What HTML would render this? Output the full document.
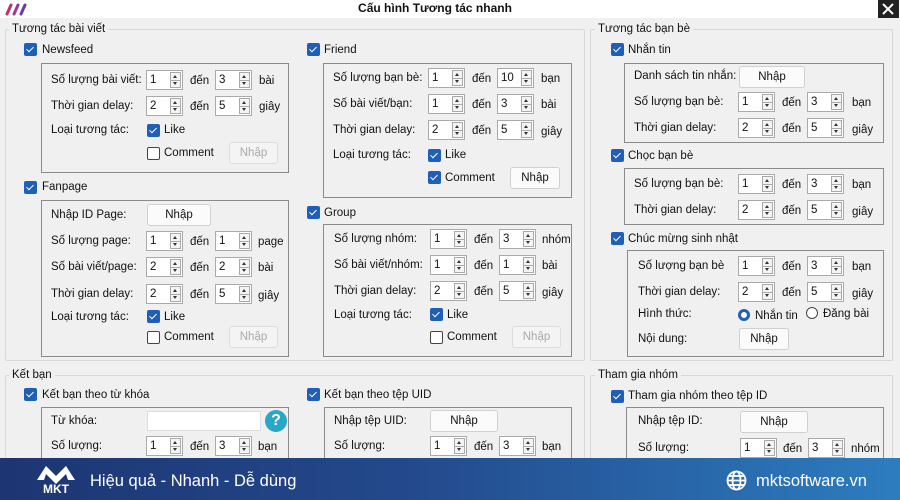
<!DOCTYPE html>
<html><head><meta charset="utf-8">
<style>
*{box-sizing:border-box;margin:0;padding:0}
body{width:900px;height:500px;overflow:hidden;background:#f0f0f0;font-family:"Liberation Sans",sans-serif;font-size:11.5px;color:#111;position:relative}
.a{position:absolute}
.t{position:absolute;white-space:nowrap;line-height:14px;transform:translateY(-7px)}
.g{position:absolute;border:1px solid #d8d8d8;border-radius:2px}
.ib{position:absolute;border:1px solid #8a8a8a}
.lg{position:absolute;background:#f0f0f0;padding:0 3px;line-height:14px}
.cb{position:absolute;width:13px;height:13px;border-radius:2px;background:#1f5fb8}
.cb:after{content:"";position:absolute;left:4px;top:1.5px;width:3px;height:6px;border:solid #fff;border-width:0 1.6px 1.6px 0;transform:rotate(45deg)}
.cu{position:absolute;width:13px;height:13px;border-radius:2px;border:1px solid #444;background:#fff}
.sp{position:absolute;width:37px;height:20px;background:#fff;border:1px solid #aaa;padding:1px 3px;line-height:16px}
.sp i{position:absolute;right:1px;top:1px;width:11px;height:16px;border:1px solid #aaa;background:#f4f4f4}
.sp i:before{content:"";position:absolute;left:2px;top:2px;border:2.5px solid transparent;border-bottom:3px solid #333;border-top:0}
.sp i:after{content:"";position:absolute;left:2px;bottom:2px;border:2.5px solid transparent;border-top:3px solid #333;border-bottom:0}
.sp i b{position:absolute;left:0;right:0;top:7px;border-top:1px solid #aaa}
.bt{position:absolute;height:22px;background:#fbfbfb;border:1px solid #d0d0d0;border-radius:3px;text-align:center;line-height:20px}
.bd{color:#aaa;background:#f4f4f4;border-color:#ddd}
</style></head><body>
<div class="a" style="left:0;top:0;width:900px;height:18px;background:#fff"></div>
<svg class="a" style="left:4px;top:2px" width="26" height="14"><g stroke-width="3" stroke-linecap="round"><line x1="3" y1="12" x2="7" y2="3" stroke="#c0306a"/><line x1="10" y1="12" x2="14" y2="3" stroke="#9b3a8c"/><line x1="17" y1="12" x2="21" y2="3" stroke="#6b3aa0"/></g></svg>
<div class="a" style="left:0;width:900px;top:1px;text-align:center;font-weight:bold;font-size:12px"><span style="position:relative;left:-15px">Cấu hình Tương tác nhanh</span></div>
<div class="a" style="left:878px;top:0;width:21px;height:18px;background:#222"></div>
<svg class="a" style="left:882px;top:3px" width="12" height="12"><path d="M1 1L11 11M11 1L1 11" stroke="#fff" stroke-width="2"/></svg>

<div class="g" style="left:5px;top:29px;width:580px;height:332px"></div><div class="lg" style="left:9px;top:22px">Tương tác bài viết</div>
<div class="g" style="left:590px;top:29px;width:303px;height:332px"></div><div class="lg" style="left:595px;top:22px">Tương tác bạn bè</div>
<div class="g" style="left:5px;top:375px;width:580px;height:100px"></div><div class="lg" style="left:9px;top:368px">Kết bạn</div>
<div class="g" style="left:590px;top:375px;width:303px;height:100px"></div><div class="lg" style="left:595px;top:368px">Tham gia nhóm</div>

<div class="cb" style="left:24px;top:43px"></div><div class="t" style="left:42px;top:50px">Newsfeed</div>
<div class="ib" style="left:41px;top:63px;width:248px;height:110px"></div>
<div class="t" style="left:51px;top:80px">Số lượng bài viết:</div><div class="sp" style="left:146px;top:70px">1<i><b></b></i></div><div class="t" style="left:190px;top:81px">đến</div><div class="sp" style="left:215px;top:70px">3<i><b></b></i></div><div class="t" style="left:259px;top:81px">bài</div>
<div class="t" style="left:51px;top:106px">Thời gian delay:</div><div class="sp" style="left:146px;top:96px">2<i><b></b></i></div><div class="t" style="left:190px;top:107px">đến</div><div class="sp" style="left:215px;top:96px">5<i><b></b></i></div><div class="t" style="left:259px;top:107px">giây</div>
<div class="t" style="left:51px;top:130px">Loại tương tác:</div><div class="cb" style="left:147px;top:124px"></div><div class="t" style="left:164px;top:130px">Like</div>
<div class="cu" style="left:147px;top:147px"></div><div class="t" style="left:164px;top:153px">Comment</div><div class="bt bd" style="left:229px;top:142px;width:49px">Nhập</div>

<div class="cb" style="left:24px;top:181px"></div><div class="t" style="left:42px;top:187px">Fanpage</div>
<div class="ib" style="left:41px;top:200px;width:248px;height:157px"></div>
<div class="t" style="left:51px;top:215px">Nhập ID Page:</div><div class="bt" style="left:147px;top:204px;width:64px">Nhập</div>
<div class="t" style="left:51px;top:241px">Số lượng page:</div><div class="sp" style="left:146px;top:231px">1<i><b></b></i></div><div class="t" style="left:190px;top:242px">đến</div><div class="sp" style="left:215px;top:231px">1<i><b></b></i></div><div class="t" style="left:258px;top:242px">page</div>
<div class="t" style="left:51px;top:267px">Số bài viết/page:</div><div class="sp" style="left:146px;top:257px">2<i><b></b></i></div><div class="t" style="left:190px;top:268px">đến</div><div class="sp" style="left:215px;top:257px">2<i><b></b></i></div><div class="t" style="left:258px;top:268px">bài</div>
<div class="t" style="left:51px;top:294px">Thời gian delay:</div><div class="sp" style="left:146px;top:284px">2<i><b></b></i></div><div class="t" style="left:190px;top:295px">đến</div><div class="sp" style="left:215px;top:284px">5<i><b></b></i></div><div class="t" style="left:258px;top:296px">giây</div>
<div class="t" style="left:51px;top:317px">Loại tương tác:</div><div class="cb" style="left:147px;top:310px"></div><div class="t" style="left:164px;top:317px">Like</div>
<div class="cu" style="left:147px;top:331px"></div><div class="t" style="left:164px;top:337px">Comment</div><div class="bt bd" style="left:229px;top:326px;width:49px">Nhập</div>

<div class="cb" style="left:307px;top:43px"></div><div class="t" style="left:324px;top:50px">Friend</div>
<div class="ib" style="left:323px;top:63px;width:249px;height:135px"></div>
<div class="t" style="left:333px;top:78px">Số lượng bạn bè:</div><div class="sp" style="left:428px;top:68px">1<i><b></b></i></div><div class="t" style="left:472px;top:79px">đến</div><div class="sp" style="left:497px;top:68px">10<i><b></b></i></div><div class="t" style="left:541px;top:79px">bạn</div>
<div class="t" style="left:333px;top:104px">Số bài viết/bạn:</div><div class="sp" style="left:428px;top:94px">1<i><b></b></i></div><div class="t" style="left:472px;top:105px">đến</div><div class="sp" style="left:497px;top:94px">3<i><b></b></i></div><div class="t" style="left:541px;top:105px">bài</div>
<div class="t" style="left:333px;top:130px">Thời gian delay:</div><div class="sp" style="left:428px;top:120px">2<i><b></b></i></div><div class="t" style="left:472px;top:131px">đến</div><div class="sp" style="left:497px;top:120px">5<i><b></b></i></div><div class="t" style="left:541px;top:132px">giây</div>
<div class="t" style="left:333px;top:155px">Loại tương tác:</div><div class="cb" style="left:428px;top:149px"></div><div class="t" style="left:445px;top:155px">Like</div>
<div class="cb" style="left:428px;top:171px"></div><div class="t" style="left:445px;top:178px">Comment</div><div class="bt" style="left:510px;top:167px;width:50px">Nhập</div>

<div class="cb" style="left:307px;top:206px"></div><div class="t" style="left:324px;top:213px">Group</div>
<div class="ib" style="left:323px;top:224px;width:249px;height:133px"></div>
<div class="t" style="left:334px;top:239px">Số lượng nhóm:</div><div class="sp" style="left:430px;top:229px">1<i><b></b></i></div><div class="t" style="left:474px;top:240px">đến</div><div class="sp" style="left:499px;top:229px">3<i><b></b></i></div><div class="t" style="left:542px;top:240px">nhóm</div>
<div class="t" style="left:334px;top:265px">Số bài viết/nhóm:</div><div class="sp" style="left:430px;top:255px">1<i><b></b></i></div><div class="t" style="left:474px;top:266px">đến</div><div class="sp" style="left:499px;top:255px">1<i><b></b></i></div><div class="t" style="left:542px;top:266px">bài</div>
<div class="t" style="left:334px;top:291px">Thời gian delay:</div><div class="sp" style="left:430px;top:281px">2<i><b></b></i></div><div class="t" style="left:474px;top:292px">đến</div><div class="sp" style="left:499px;top:281px">5<i><b></b></i></div><div class="t" style="left:542px;top:293px">giây</div>
<div class="t" style="left:334px;top:315px">Loại tương tác:</div><div class="cb" style="left:430px;top:308px"></div><div class="t" style="left:447px;top:315px">Like</div>
<div class="cu" style="left:430px;top:331px"></div><div class="t" style="left:447px;top:337px">Comment</div><div class="bt bd" style="left:512px;top:326px;width:49px">Nhập</div>

<div class="cb" style="left:611px;top:43px"></div><div class="t" style="left:628px;top:50px">Nhắn tin</div>
<div class="ib" style="left:624px;top:63px;width:260px;height:80px"></div>
<div class="t" style="left:634px;top:76px">Danh sách tin nhắn:</div><div class="bt" style="left:739px;top:66px;width:66px">Nhập</div>
<div class="t" style="left:634px;top:102px">Số lượng bạn bè:</div><div class="sp" style="left:738px;top:92px">1<i><b></b></i></div><div class="t" style="left:782px;top:103px">đến</div><div class="sp" style="left:807px;top:92px">3<i><b></b></i></div><div class="t" style="left:852px;top:103px">bạn</div>
<div class="t" style="left:634px;top:128px">Thời gian delay:</div><div class="sp" style="left:738px;top:118px">2<i><b></b></i></div><div class="t" style="left:782px;top:129px">đến</div><div class="sp" style="left:807px;top:118px">5<i><b></b></i></div><div class="t" style="left:852px;top:130px">giây</div>

<div class="cb" style="left:611px;top:149px"></div><div class="t" style="left:628px;top:156px">Chọc bạn bè</div>
<div class="ib" style="left:624px;top:168px;width:260px;height:57px"></div>
<div class="t" style="left:634px;top:184px">Số lượng bạn bè:</div><div class="sp" style="left:738px;top:174px">1<i><b></b></i></div><div class="t" style="left:782px;top:185px">đến</div><div class="sp" style="left:807px;top:174px">3<i><b></b></i></div><div class="t" style="left:852px;top:185px">bạn</div>
<div class="t" style="left:634px;top:210px">Thời gian delay:</div><div class="sp" style="left:738px;top:200px">2<i><b></b></i></div><div class="t" style="left:782px;top:211px">đến</div><div class="sp" style="left:807px;top:200px">5<i><b></b></i></div><div class="t" style="left:852px;top:212px">giây</div>

<div class="cb" style="left:611px;top:232px"></div><div class="t" style="left:628px;top:239px">Chúc mừng sinh nhật</div>
<div class="ib" style="left:627px;top:250px;width:257px;height:107px"></div>
<div class="t" style="left:638px;top:266px">Số lượng bạn bè</div><div class="sp" style="left:738px;top:256px">1<i><b></b></i></div><div class="t" style="left:782px;top:267px">đến</div><div class="sp" style="left:807px;top:256px">3<i><b></b></i></div><div class="t" style="left:852px;top:267px">bạn</div>
<div class="t" style="left:638px;top:292px">Thời gian delay:</div><div class="sp" style="left:738px;top:282px">2<i><b></b></i></div><div class="t" style="left:782px;top:293px">đến</div><div class="sp" style="left:807px;top:282px">5<i><b></b></i></div><div class="t" style="left:852px;top:294px">giây</div>
<div class="t" style="left:638px;top:314px">Hình thức:</div>
<div class="a" style="left:738px;top:309px;width:12px;height:12px;border-radius:50%;border:3.5px solid #1f5fb8;background:#fff"></div><div class="t" style="left:755px;top:316px">Nhắn tin</div>
<div class="a" style="left:806px;top:307px;width:12px;height:12px;border-radius:50%;border:1px solid #444;background:#fff"></div><div class="t" style="left:823px;top:314px">Đăng bài</div>
<div class="t" style="left:638px;top:339px">Nội dung:</div><div class="bt" style="left:739px;top:328px;width:50px">Nhập</div>

<div class="cb" style="left:24px;top:388px"></div><div class="t" style="left:42px;top:395px">Kết bạn theo từ khóa</div>
<div class="ib" style="left:41px;top:407px;width:248px;height:60px"></div>
<div class="t" style="left:51px;top:421px">Từ khóa:</div><div class="a" style="left:147px;top:411px;width:114px;height:20px;background:#fff;border:1px solid #ddd"></div>
<div class="a" style="left:265px;top:410px;width:22px;height:22px;border-radius:50%;background:#2aa6c6;color:#fff;font-weight:bold;font-size:16px;text-align:center;line-height:22px">?</div>
<div class="t" style="left:51px;top:446px">Số lượng:</div><div class="sp" style="left:146px;top:436px">1<i><b></b></i></div><div class="t" style="left:190px;top:447px">đến</div><div class="sp" style="left:215px;top:436px">3<i><b></b></i></div><div class="t" style="left:258px;top:447px">bạn</div>

<div class="cb" style="left:307px;top:388px"></div><div class="t" style="left:324px;top:395px">Kết bạn theo tệp UID</div>
<div class="ib" style="left:324px;top:407px;width:248px;height:60px"></div>
<div class="t" style="left:334px;top:421px">Nhập tệp UID:</div><div class="bt" style="left:430px;top:410px;width:68px">Nhập</div>
<div class="t" style="left:334px;top:446px">Số lượng:</div><div class="sp" style="left:430px;top:436px">1<i><b></b></i></div><div class="t" style="left:474px;top:447px">đến</div><div class="sp" style="left:499px;top:436px">3<i><b></b></i></div><div class="t" style="left:542px;top:447px">bạn</div>

<div class="cb" style="left:611px;top:390px"></div><div class="t" style="left:628px;top:396px">Tham gia nhóm theo tệp ID</div>
<div class="ib" style="left:626px;top:407px;width:258px;height:60px"></div>
<div class="t" style="left:638px;top:421px">Nhập tệp ID:</div><div class="bt" style="left:740px;top:411px;width:68px">Nhập</div>
<div class="t" style="left:638px;top:448px">Số lượng:</div><div class="sp" style="left:740px;top:438px">1<i><b></b></i></div><div class="t" style="left:783px;top:449px">đến</div><div class="sp" style="left:808px;top:438px">3<i><b></b></i></div><div class="t" style="left:851px;top:449px">nhóm</div>

<div class="a" style="left:0;top:458px;width:900px;height:42px;background:linear-gradient(90deg,#1d3572 0%,#23498c 45%,#2c7dbf 100%)"></div>
<svg class="a" style="left:34px;top:460px" width="44" height="38"><path d="M3 20L12 6L22 16L32 6L41 20L34 20L32 14L22 24L12 14L10 20Z" fill="#fff"/><text x="22" y="33" fill="#fff" font-family="Liberation Sans" font-weight="bold" font-size="12" text-anchor="middle">MKT</text></svg>
<div class="a" style="left:90px;top:470px;color:#fff;font-size:16.5px;line-height:22px">Hiệu quả - Nhanh - Dễ dùng</div>
<svg class="a" style="left:726px;top:470px" width="21" height="21"><g fill="none" stroke="#fff" stroke-width="1.8"><circle cx="10.5" cy="10.5" r="9"/><ellipse cx="10.5" cy="10.5" rx="4" ry="9"/><line x1="1.5" y1="10.5" x2="19.5" y2="10.5"/><line x1="3" y1="6" x2="18" y2="6"/><line x1="3" y1="15" x2="18" y2="15"/></g></svg>
<div class="a" style="left:756px;top:470px;color:#fff;font-size:16.5px;line-height:22px">mktsoftware.vn</div>
</body></html>
